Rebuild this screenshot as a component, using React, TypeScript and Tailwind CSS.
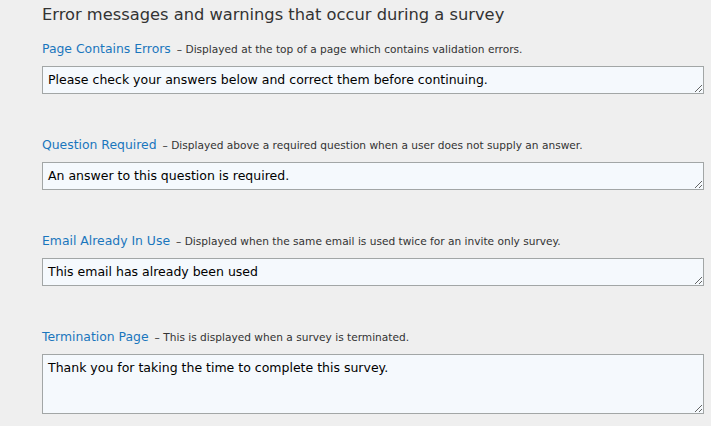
import React from "react";

const items = [
  {
    title: "Page Contains Errors",
    desc: "Displayed at the top of a page which contains validation errors.",
    value: "Please check your answers below and correct them before continuing.",
    h: "h-[28px]",
  },
  {
    title: "Question Required",
    desc: "Displayed above a required question when a user does not supply an answer.",
    value: "An answer to this question is required.",
    h: "h-[28px]",
  },
  {
    title: "Email Already In Use",
    desc: "Displayed when the same email is used twice for an invite only survey.",
    value: "This email has already been used",
    h: "h-[28px]",
  },
  {
    title: "Termination Page",
    desc: "This is displayed when a survey is terminated.",
    value: "Thank you for taking the time to complete this survey.",
    h: "h-[60px]",
  },
];

export default function App() {
  return (
    <div
      className="w-[711px] h-[426px] overflow-hidden bg-[#efefef] pl-[42px] pr-[7px]"
      style={{ fontFamily: '"DejaVu Sans", Verdana, sans-serif' }}
    >
      <h1 className="pt-[4px] text-[16.3px] leading-[22px] text-[#333333] font-normal">
        Error messages and warnings that occur during a survey
      </h1>
      <div className="flex flex-col">
        {items.map((it, i) => (
          <div key={i} className={i === 0 ? "mt-[13px]" : "mt-[41px]"}>
            <div className="flex items-baseline leading-[20px] mb-[7px] whitespace-nowrap">
              <span className="text-[12.4px] text-[#1a76bd]">{it.title}</span>
              <span className="text-[10.6px] text-[#333333] ml-[6px]">
                – {it.desc}
              </span>
            </div>
            <textarea
              readOnly
              defaultValue={it.value}
              className={`block w-[662px] ${it.h} border border-[#a2a6a6] bg-[#f5f9fd] px-[5px] pt-[5px] text-[12.5px] leading-[16px] text-black resize-y outline-none`}
              style={{ fontFamily: '"DejaVu Sans", Verdana, sans-serif' }}
            />
          </div>
        ))}
      </div>
    </div>
  );
}
